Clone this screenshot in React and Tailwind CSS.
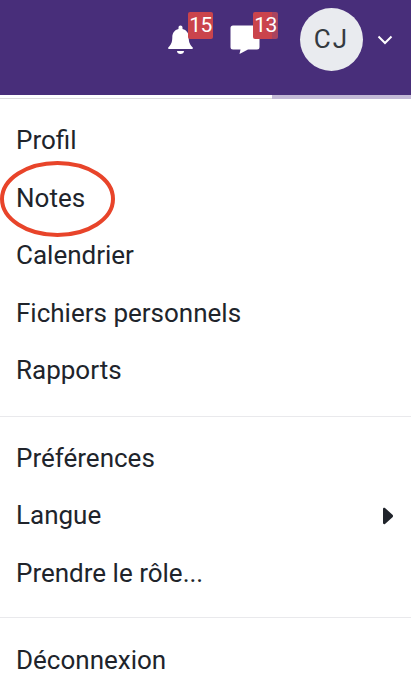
import React from "react";

const FONT = "font-['Roboto',sans-serif]";

const Badge = ({ value, className }) => (
  <span className={`absolute flex h-[27px] w-[25px] items-center justify-center rounded-[2px] text-[21px] leading-none tracking-[-0.5px] text-white ${className}`}>
    {value}
  </span>
);

const MenuItem = ({ label, children }) => (
  <div className="flex h-[57.5px] items-center justify-between pl-[16px] pr-[17px] text-[26px] text-[#20242b]">
    <span>{label}</span>
    {children}
  </div>
);

export default function App() {
  return (
    <div className={`relative h-[698px] w-[411px] overflow-hidden bg-white ${FONT}`}>
      {/* top bar */}
      <header className="flex h-[95px] items-start bg-[#482e7a] pl-[167px]">
        <div className="relative mt-[12px] h-[45px] w-[60px]">
          <svg className="absolute left-0 top-[13px]" width="27" height="30" viewBox="0 0 27 30" fill="#fff">
            <path d="M13.5 0.5c1.2 0 2 .9 2 2v1.4c4 .9 6.2 4.2 6.2 8.3 0 5.3 1.4 7.6 4 10.3.5.6.2 1.5-.7 1.5H2c-.9 0-1.2-.9-.7-1.5 2.6-2.7 4-5 4-10.3 0-4.1 2.200-7.400 6.200-8.300V2.500c0-1.100.8-2 2-2z" />
            <path d="M10 26h7c0 1.800-1.500 3-3.500 3S10 27.800 10 26z" />
          </svg>
          <Badge value="15" className="left-[21px] top-0 bg-[#ca444c]" />
        </div>
        <div className="relative ml-[3px] mt-[12px] h-[45px] w-[70px]">
          <svg className="absolute left-0 top-[13px]" width="30" height="30" viewBox="0 0 30 30" fill="#fff">
            <path d="M3 0.500h24a2.500 2.500 0 0 1 2.500 2.500v19a2.500 2.500 0 0 1-2.500 2.500H18l-8.500 4.500 1-4.500H3A2.500 2.500 0 0 1 .5 22V3A2.500 2.500 0 0 1 3 .5z" />
          </svg>
          {/* right edge of this badge is tinted in the screenshot */}
          <Badge value="13" className="left-[23px] top-0 bg-[linear-gradient(90deg,#ca444c_19px,#a9445f_19px)]" />
        </div>
        <div className="mt-[8px] flex h-[63px] w-[63px] items-center justify-center rounded-full bg-[#e9ebef] text-[26px] tracking-[2px] text-[#343a40]">
          CJ
        </div>
        <svg className="ml-[14px] mt-[35px]" width="16" height="10" viewBox="0 0 16 10" fill="none" stroke="#fff" strokeWidth="2">
          <path d="M1.500 1.500 8 8l6.500-6.500" />
        </svg>
      </header>

      {/* scroll indicator under the bar */}
      <div className="flex h-[4px]">
        <div className="h-[4px] w-[272px] border-b border-[#dcdcdc]" />
        <div className="h-[4px] flex-1 bg-[#c3b9d6]" />
      </div>

      {/* menu */}
      <nav className="pt-[13px]">
        <MenuItem label="Profil" />
        <MenuItem label="Notes" />
        <MenuItem label="Calendrier" />
        <MenuItem label="Fichiers personnels" />
        <MenuItem label="Rapports" />
        <div className="mt-[16px] mb-[13px] border-t border-[#e9e9ec]" />
        <MenuItem label="Préférences" />
        <MenuItem label="Langue">
          <svg width="12" height="18" viewBox="0 0 12 18" fill="#20242b">
            <path d="M1 2c0-1 1-1.500 2-1l7.500 6.800c.7.600.7 1.800 0 2.400L3 17c-1 .5-2 0-2-1z" />
          </svg>
        </MenuItem>
        <MenuItem label="Prendre le rôle..." />
        <div className="mt-[15px] mb-[14px] border-t border-[#e9e9ec]" />
        <MenuItem label="Déconnexion" />
      </nav>

      {/* hand-drawn annotation around "Notes" */}
      <svg className="absolute left-0 top-[160px]" width="118" height="80" viewBox="0 0 118 80" fill="none">
        <ellipse cx="57.500" cy="39" rx="55.500" ry="36" stroke="#e8442a" strokeWidth="4" />
      </svg>
    </div>
  );
}
